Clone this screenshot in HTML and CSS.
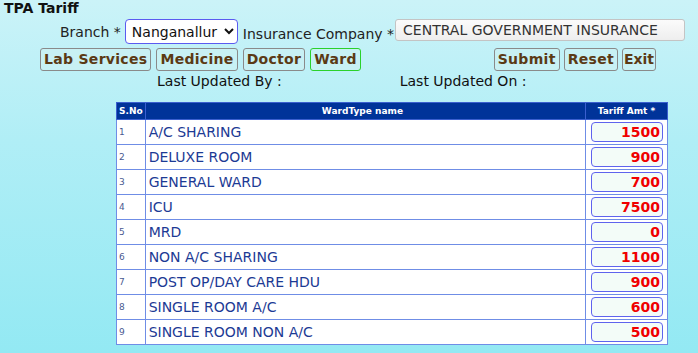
FILE: index.html
```html
<!DOCTYPE html>
<html lang="en">
<head>
    <meta charset="UTF-8">
    <title>TPA Tariff</title>
    <link rel="stylesheet" href="styles.css">
</head>
<body>
    <div class="page">
        <h1 class="title">TPA Tariff</h1>

        <!-- Branch / Insurance -->
        <div class="row row-select">
            <label class="lbl">Branch *</label>
            <select class="branch">
                <option>Nanganallur</option>
            </select>
            <label class="lbl lbl-ins">Insurance Company *</label>
            <input class="ins" type="text" value="CENTRAL GOVERNMENT INSURANCE">
        </div>

        <!-- Tabs and actions -->
        <div class="row row-buttons">
            <div class="tabs">
                <button class="btn">Lab Services</button>
                <button class="btn">Medicine</button>
                <button class="btn">Doctor</button>
                <button class="btn active">Ward</button>
            </div>
            <div class="actions">
                <button class="btn">Submit</button>
                <button class="btn">Reset</button>
                <button class="btn btn-exit">Exit</button>
            </div>
        </div>

        <div class="row row-updated">
            <span class="upd">Last Updated By :</span>
            <span class="upd upd-on">Last Updated On :</span>
        </div>

        <!-- Tariff grid -->
        <table class="grid">
            <thead>
                <tr>
                    <th class="c-no">S.No</th>
                    <th class="c-name">WardType name</th>
                    <th class="c-amt">Tariff Amt *</th>
                </tr>
            </thead>
            <tbody>
                <tr><td class="c-no">1</td><td class="c-name">A/C SHARING</td><td class="c-amt"><input class="amt" value="1500"></td></tr>
                <tr><td class="c-no">2</td><td class="c-name">DELUXE ROOM</td><td class="c-amt"><input class="amt" value="900"></td></tr>
                <tr><td class="c-no">3</td><td class="c-name">GENERAL WARD</td><td class="c-amt"><input class="amt" value="700"></td></tr>
                <tr><td class="c-no">4</td><td class="c-name">ICU</td><td class="c-amt"><input class="amt" value="7500"></td></tr>
                <tr><td class="c-no">5</td><td class="c-name">MRD</td><td class="c-amt"><input class="amt" value="0"></td></tr>
                <tr><td class="c-no">6</td><td class="c-name">NON A/C SHARING</td><td class="c-amt"><input class="amt" value="1100"></td></tr>
                <tr><td class="c-no">7</td><td class="c-name">POST OP/DAY CARE HDU</td><td class="c-amt"><input class="amt" value="900"></td></tr>
                <tr><td class="c-no">8</td><td class="c-name">SINGLE ROOM A/C</td><td class="c-amt"><input class="amt" value="600"></td></tr>
                <tr><td class="c-no">9</td><td class="c-name">SINGLE ROOM NON A/C</td><td class="c-amt"><input class="amt" value="500"></td></tr>
            </tbody>
        </table>
    </div>
</body>
</html>
```

FILE: styles.css
```css
/* Basic Reset */
body, h1, p, button, input, select {
    margin: 0;
    padding: 0;
    font-family: Verdana, 'DejaVu Sans', sans-serif;
}

body {
    background: linear-gradient(180deg, #cbf3f8 0%, #b0eef6 40%, #93e9f3 100%);
    color: #222;
    min-height: 100vh;
    overflow: hidden;
}

.page {
    padding: 0 0 0 4px;
}

.title {
    font-size: 14px;
    font-weight: bold;
    color: #111;
    height: 18px;
    line-height: 16px;
}

.row {
    display: flex;
    align-items: center;
}

.lbl {
    font-size: 14px;
    color: #222;
}

.row-select {
    padding-left: 56px;
    height: 27px;
}

.branch {
    width: 113px;
    height: 25px;
    margin-left: 4px;
    font-size: 14px;
    border: 1px solid #5b5bf0;
    border-radius: 4px;
    background: #fff;
    color: #111;
    padding-left: 2px;
}

.lbl-ins {
    margin-left: 5px;
    margin-top: 4px;
}

.ins {
    width: 290px;
    height: 22px;
    margin-left: 1px;
    margin-top: -4px;
    box-sizing: border-box;
    font-size: 14px;
    color: #333;
    padding-left: 7px;
    border: 1px solid #c4c4c4;
    border-radius: 3px;
    background: linear-gradient(180deg, #fbfbfb, #eeeeee);
}

.row-buttons {
    padding-left: 36px;
    margin-top: 2px;
    height: 24px;
}

.tabs, .actions {
    display: flex;
    gap: 5px;
}

.actions {
    margin-left: 133px;
    gap: 4px;
}

.btn {
    height: 23px;
    padding: 0 3px;
    font-size: 14px;
    font-weight: bold;
    letter-spacing: 0.3px;
    color: #5b3a14;
    background: #c8f1f4;
    border: 1px solid #8a8a8a;
    border-radius: 3px;
    cursor: pointer;
}

.btn-exit {
    padding: 0 1px;
    letter-spacing: 0;
}

.btn.active {
    border-color: #2bd12b;
}

.row-updated {
    padding-left: 153px;
    height: 20px;
}

.upd {
    font-size: 14px;
    color: #111;
}

.upd-on {
    margin-left: 118px;
}

.grid {
    margin-left: 112px;
    margin-top: 11px;
    width: 552px;
    border-collapse: collapse;
    background: #fff;
}

.grid th {
    background: #003399;
    color: #fff;
    font-size: 9px;
    font-weight: bold;
    height: 16px;
    padding: 0 3px;
    border: 1px solid #3a5fcf;
}

.grid th.c-no {
    text-align: left;
    padding: 0 2px;
}

.grid th.c-name {
    text-align: right;
    padding-right: 182px;
}

.grid td {
    height: 24px;
    border: 1px solid #6f8de6;
    padding: 0 3px;
}

.grid td.c-no {
    width: 22px;
    padding: 0 2px;
    font-size: 9px;
    color: #4a5a90;
}

.grid td.c-name {
    font-size: 14px;
    color: #1c3a94;
}

.grid td.c-amt {
    width: 74px;
    padding: 0 2px 0 5px;
}

.amt {
    width: 72px;
    height: 20px;
    box-sizing: border-box;
    text-align: right;
    padding-right: 2px;
    font-size: 14px;
    font-weight: bold;
    color: #f00000;
    background: #f3fcf8;
    border: 1px solid #5f63ee;
    border-radius: 4px;
}
```
